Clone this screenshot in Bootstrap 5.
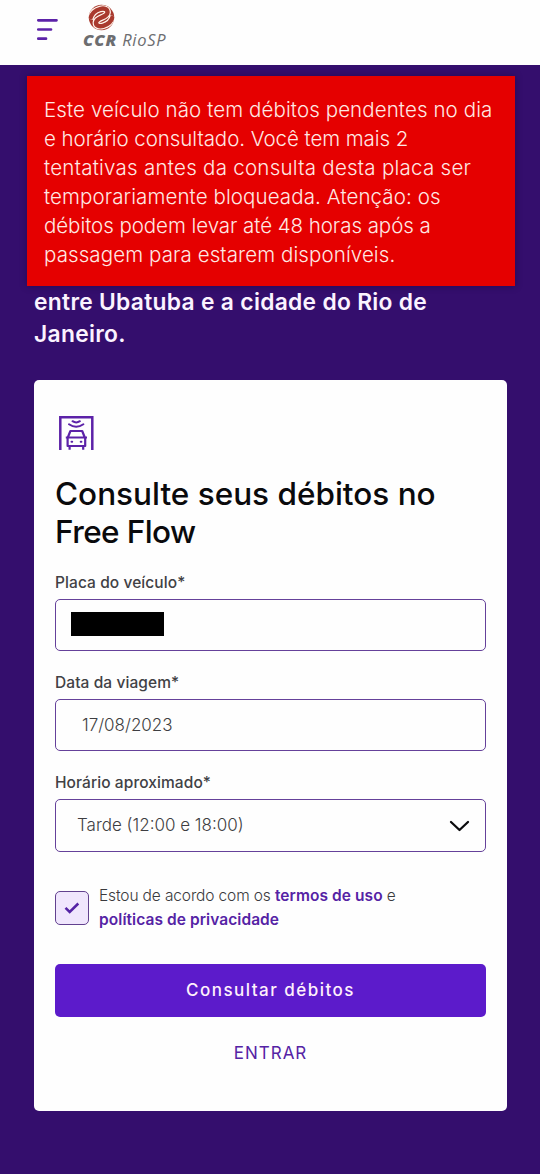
<!DOCTYPE html>
<html lang="pt-BR">
<head>
<meta charset="utf-8">
<meta name="viewport" content="width=device-width, initial-scale=1">
<title>CCR RioSP – Free Flow</title>
<link href="https://cdn.jsdelivr.net/npm/bootstrap@5.3.0/dist/css/bootstrap.min.css" rel="stylesheet">
<style>
  body { background: #340e6d; font-family: Inter, "Open Sans", sans-serif; min-height: 1174px; color: #3a3a3d; }
  .topbar { height: 65px; background: #fefefe; padding: 0 36px; }
  .menu-icon { margin-top: 17px; }
  .brand-block { margin: 4px 0 0 23px; }
  .brand-mark { margin-left: 5px; }
  .brand-name { font-family: "Open Sans", sans-serif; font-style: italic; font-size: 16.5px; line-height: 18px; letter-spacing: .7px; color: #6c6d70; white-space: nowrap; }
  .brand-name b { font-weight: 800; letter-spacing: .9px; }
  .notice { background: #e50000; color: #ffe9e4; margin: 11px 25px 0 27px; padding: 19px 0 17px 17px; height: 210px; font-size: 20.5px; line-height: 29px; font-weight: 300; letter-spacing: .1px; white-space: nowrap; box-shadow: 0 0 7px rgba(20,0,50,.45); }
  .tight { letter-spacing: -.05px; }
  .loose { letter-spacing: .26px; }
  .intro { font-size: 22.8px; line-height: 31.5px; font-weight: 600; letter-spacing: .3px; color: #fbf3ff; padding: 0 34px; height: 94px; white-space: nowrap; }
  .panel { margin: 0 33px 0 34px; height: 731px; border-radius: 5px; border: 0; background: #fefefe; padding: 34px 21px 0; }
  .panel-title { font-size: 31.5px; line-height: 38px; font-weight: 500; color: #0a0a0c; margin: 23px 0 22px; white-space: nowrap; }
  .panel-title span { letter-spacing: -.6px; }
  .field-group { margin-bottom: 22px; }
  .field-label { font-size: 15.5px; line-height: 20px; font-weight: 500; letter-spacing: .08px; color: #414145; margin: 0 0 5.5px; }
  .field { height: 52.7px; border: 1px solid #65419a; border-radius: 5px; background: #fefefe; font-size: 17px; font-weight: 300; color: #3e3e42; padding: 1px 15px 0 21px; }
  .field-plate { padding: 0 0 2px 15px; }
  .field-date { padding-left: 26px; }
  .redacted { width: 93px; height: 24px; background: #000; }
  .agree { margin-top: 32px; }
  .agree-box { width: 34px; height: 34px; margin-top: 7px; background: #f0e6fd; border: 1px solid #62418f; border-radius: 5px; }
  .agree-text { margin-left: 10px; font-size: 15.5px; line-height: 24.5px; font-weight: 300; letter-spacing: -.13px; white-space: nowrap; }
  .agree-text a { color: #5523a5; font-weight: 600; letter-spacing: .07px; text-decoration: none; }
  .btn-query { height: 53px; margin-top: 31px; padding: 1px 0 0; background: #5c1bcb; color: #fff0fb; font-size: 17px; font-weight: 500; letter-spacing: 1.47px; border: 0; border-radius: 5px; }
  .btn-login { color: #5523a5; margin-top: 24px; font-size: 17px; font-weight: 400; letter-spacing: 1px; line-height: 24px; }
</style>
</head>
<body>
<nav class="topbar d-flex align-items-start">
  <svg class="menu-icon" width="24" height="26" viewBox="0 0 24 26" fill="none" stroke="#5c22a8" stroke-width="2.7" stroke-linecap="round"><path d="M2.3 3.3H20.5M2.3 12.500H15M2.3 21.700H10"/></svg>
  <div class="brand-block d-flex flex-column">
    <svg class="brand-mark" width="27" height="27" viewBox="0 0 27 27">
      <defs><clipPath id="disc"><circle cx="13.500" cy="13.500" r="12.700"/></clipPath></defs>
      <g clip-path="url(#disc)" fill="none">
        <rect width="27" height="27" fill="#a93a2e"/>
        <path stroke="#fff3ea" stroke-width="6.800" d="M2 15C5 4 20 1.500 19.500 8.500C19 14 8.500 13 8 18.500C7.500 25 22 23 25 12"/>
        <path stroke="#a93a2e" stroke-width="4.400" d="M2 15C5 4 20 1.500 19.500 8.500C19 14 8.500 13 8 18.500C7.500 25 22 23 25 12"/>
      </g>
    </svg>
    <div class="brand-name"><b>CCR</b> RioSP</div>
  </div>
</nav>

<div class="notice" role="alert">Este veículo não tem débitos pendentes no dia<br><span class="tight">e horário consultado. Você tem mais 2</span><br><span class="loose">tentativas antes da consulta desta placa ser</span><br>temporariamente bloqueada. Atenção: os<br><span class="tight">débitos podem levar até 48 horas após a</span><br>passagem para estarem disponíveis.</div>

<p class="intro mb-0">entre Ubatuba e a cidade do Rio de<br>Janeiro.</p>

<main class="panel card">
  <svg width="42" height="38" viewBox="0 0 42 38" fill="none" stroke="#5c22a8" stroke-width="2.500">
    <path d="M5.300 36V3.200H37.300V36"/>
    <path stroke-width="2" stroke-linecap="round" d="M17.500 7.200q3.700 2.400 7.400 0M14 10.300q7.200 5 14.400 0"/>
    <path stroke-width="2.200" stroke-linejoin="round" d="M12.800 23.500l2.600-6.500h11.800l2.600 6.500M12.600 23.500h17.600v8.500H12.600zM10.800 23.500h21.200M14.600 32.500v3.200M28.200 32.500v3.200"/>
    <path stroke-width="2" stroke-linecap="round" d="M16.500 27.800h.7M25.700 27.800h.7"/>
  </svg>
  <h1 class="panel-title">Consulte seus débitos no<br><span>Free Flow</span></h1>
  <form>
    <div class="field-group">
      <label class="field-label d-block">Placa do veículo*</label>
      <div class="field field-plate d-flex align-items-center"><div class="redacted"></div></div>
    </div>
    <div class="field-group">
      <label class="field-label d-block">Data da viagem*</label>
      <div class="field field-date d-flex align-items-center">17/08/2023</div>
    </div>
    <div>
      <label class="field-label d-block">Horário aproximado*</label>
      <div class="field d-flex align-items-center justify-content-between">Tarde (12:00 e 18:00)
        <svg width="21" height="14" viewBox="0 0 21 14" fill="none" stroke="#0b0b0d" stroke-width="2.300" stroke-linecap="round" stroke-linejoin="round"><path d="M2 3l8.500 8L19 3"/></svg>
      </div>
    </div>
    <div class="agree d-flex">
      <div class="agree-box d-flex align-items-center justify-content-center flex-shrink-0">
        <svg width="18" height="14" viewBox="0 0 18 14" fill="none" stroke="#5523a5" stroke-width="2.500"><path d="M2.500 6.800l4.200 4.200L15.300 2.500"/></svg>
      </div>
      <div class="agree-text">Estou de acordo com os <a href="#">termos de uso</a> e<br><a href="#">políticas de privacidade</a></div>
    </div>
    <button type="button" class="btn btn-query w-100">Consultar débitos</button>
    <button type="button" class="btn btn-login w-100 p-0 border-0">ENTRAR</button>
  </form>
</main>
<script src="https://cdn.jsdelivr.net/npm/bootstrap@5.3.0/dist/js/bootstrap.bundle.min.js"></script>
</body>
</html>
